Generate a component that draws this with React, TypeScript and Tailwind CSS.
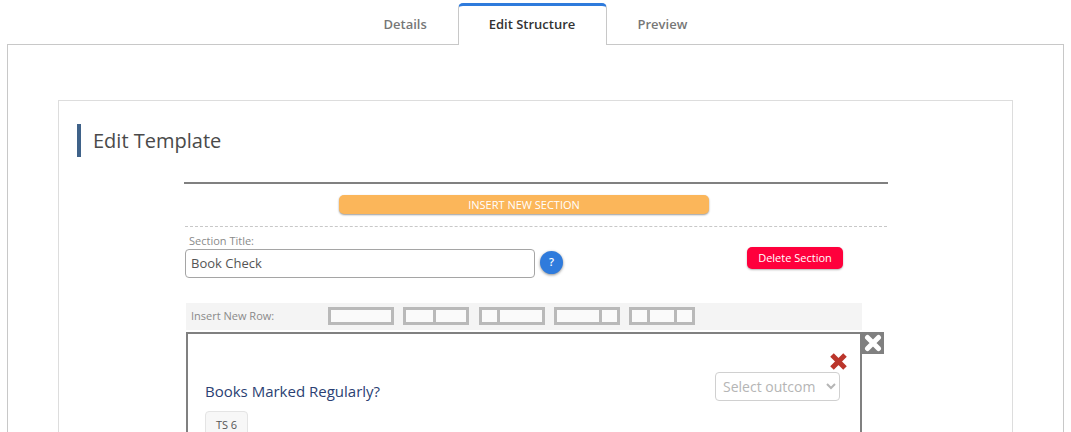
import React from 'react';

const font = { fontFamily: '"Open Sans", sans-serif' };

const RowIcon: React.FC<{ cols: string[] }> = ({ cols }) => (
  <div className="flex w-[66px] h-[18px] border-[3px] border-[#b9b9b9] bg-[#fafafa]">
    {cols.map((c, i) => (
      <div key={i} className={`${c} ${i > 0 ? 'border-l-[3px] border-[#b9b9b9]' : ''}`} />
    ))}
  </div>
);

export default function App() {
  return (
    <div style={font} className="w-[1071px] h-[432px] overflow-hidden bg-white">
      {/* tabs */}
      <div className="flex justify-center pt-[3px] pl-[1px] h-[45px]">
        <div className="w-[104px] pt-[12px] pl-[30px] text-[13px] leading-[18px] font-semibold text-[#777]">Details</div>
        <div className="relative z-10 w-[149px] h-[42px] bg-white border-x border-[#c8c8c8] border-t-[3px] border-t-[#2f7bdc] rounded-t-[5px] pt-[9px] text-center text-[13px] leading-[18px] font-semibold text-[#333]">
          Edit Structure
        </div>
        <div className="w-[112px] pt-[12px] pl-[31px] text-[13px] leading-[18px] font-semibold text-[#777]">Preview</div>
      </div>

      {/* main panel */}
      <div className="-mt-px mx-[7px] w-[1057px] border border-[#c8c8c8] px-[50px] pt-[55px]">
        <div className="w-[955px] border border-[#dddddd] pt-[23px] pl-[18px]">
          <div className="flex items-center h-[33px] border-l-4 border-[#3f6289] pl-3 text-[20px] text-[#4a4a4a]">Edit Template</div>

          <div className="ml-[107px] mt-[25px] w-[704px]">
            <div className="h-[2px] bg-[#808080]" />
            <div className="pt-[11px] pb-[12px] pl-[154px] border-b border-dashed border-[#c8c8c8] ml-px w-[702px]">
              <button className="block w-[370px] h-[19px] rounded-[5px] bg-[#fbb65a] text-[11px] leading-[19px] text-white shadow-[0_1px_2px_rgba(0,0,0,0.4)]">
                INSERT NEW SECTION
              </button>
            </div>

            {/* section title */}
            <div className="flex items-start ml-px mt-[7px]">
              <div className="w-[350px]">
                <div className="pl-[4px] text-[11px] leading-[14px] text-[#8a8a8a]">Section Title:</div>
                <input
                  readOnly
                  value="Book Check"
                  className="block w-[350px] h-[29px] mt-px pl-[5px] pb-[2px] rounded-[4px] border border-[#a5a5a5] text-[13px] text-[#555] outline-none"
                />
              </div>
              <button className="mt-[17px] ml-[5px] w-[23px] h-[23px] rounded-full bg-[#2f7bdc] text-[11px] font-semibold text-white shadow-[0_1px_3px_rgba(0,0,0,0.45)]">?</button>
              <button className="mt-[13px] ml-[184px] w-[96px] h-[22px] rounded-[5px] bg-[#ff003c] text-[11px] text-white shadow-[0_1px_2px_rgba(0,0,0,0.3)]">Delete Section</button>
            </div>

            {/* insert row */}
            <div className="flex items-center h-[27px] w-[676px] ml-[2px] mt-[25px] bg-[#f4f4f4] pb-[1px]">
              <div className="w-[142px] pl-[5px] text-[11px] text-[#8a8a8a]">Insert New Row:</div>
              <div className="flex gap-[9px]">
                <RowIcon cols={['flex-1']} />
                <RowIcon cols={['w-[27px]', 'flex-1']} />
                <div className="ml-px"><RowIcon cols={['w-[15px]', 'flex-1']} /></div>
                <RowIcon cols={['w-[42px]', 'flex-1']} />
                <RowIcon cols={['w-[15px]', 'w-[27px]', 'flex-1']} />
              </div>
            </div>

            {/* row */}
            <div className="relative w-[676px] h-[140px] ml-[2px] mt-[2px] border-2 border-[#808080] pl-[17px] pr-[20px]">
              <div className="absolute -right-[24px] -top-[2px] w-[22px] h-[22px] bg-[#808080] flex items-center justify-center">
                <svg width="18" height="18" viewBox="0 0 18 18">
                  <path d="M3.5 3.5 L14.5 14.5 M14.5 3.5 L3.5 14.5" stroke="#fff" strokeWidth="5" strokeLinecap="round" />
                </svg>
              </div>
              <div className="absolute right-[12px] top-[18px]">
                <svg width="19" height="19" viewBox="0 0 19 19" className="block">
                  <path d="M3 3 L16 16 M16 3 L3 16" stroke="#bb352b" strokeWidth="5" />
                </svg>
              </div>
              <div className="flex justify-between items-start pt-[38px]">
                <div className="pt-[8px] text-[15px] leading-[22px] text-[#2b3f73]">Books Marked Regularly?</div>
                <select className="w-[125px] h-[29px] rounded-[4px] border border-[#d0d0d0] bg-white pl-[3px] pr-[8px] text-[14px] text-[#b5b5b5] outline-none">
                  <option>Select outcome</option>
                </select>
              </div>
              <div className="mt-[9px] w-[43px] h-[30px] rounded-[4px] border border-[#e4e4e4] bg-[#f7f7f7] pt-[5px] text-center text-[11px] text-[#555]">TS 6</div>
            </div>
          </div>
        </div>
      </div>
    </div>
  );
}
